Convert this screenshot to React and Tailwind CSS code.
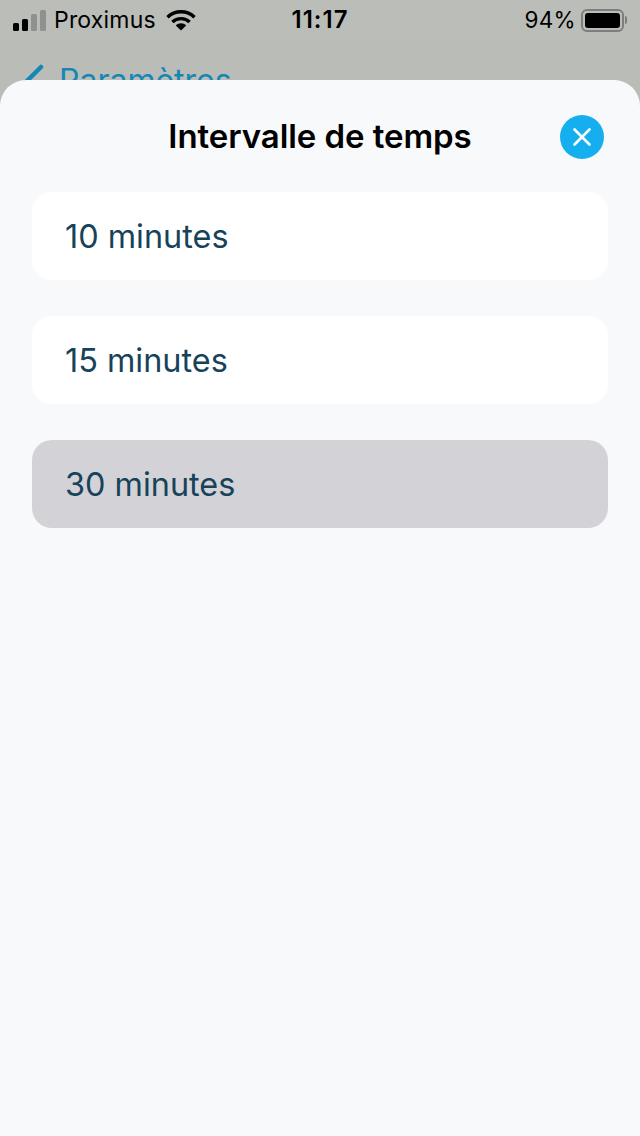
import React from 'react';

const options = ['10 minutes', '15 minutes', '30 minutes'];
const selected = '30 minutes';

function StatusBar() {
  return (
    <div className="flex h-10 items-center justify-between px-[13px] text-black">
      <div className="flex w-[240px] items-center">
        <div className="flex items-end gap-[3px]">
          <span className="h-[8px] w-[6px] rounded-[1.5px] bg-black" />
          <span className="h-[12px] w-[6px] rounded-[1.5px] bg-black" />
          <span className="h-[17px] w-[6px] rounded-[1.5px] bg-[#8f918f]" />
          <span className="h-[21px] w-[6px] rounded-[1.5px] bg-[#8f918f]" />
        </div>
        <span className="ml-[8px] text-[23px] leading-none tracking-[0.2px]">Proximus</span>
        <svg className="ml-[10px]" width="30" height="22" viewBox="0 0 30 22" fill="none">
          <path d="M1.5 8.2C8.8 1 21.2 1 28.5 8.2" stroke="#000" strokeWidth="3.4" />
          <path d="M6.4 13C10.9 8.5 19.1 8.5 23.6 13" stroke="#000" strokeWidth="3.4" />
          <path d="M15 21.5L9.8 16.5C12.4 13.6 17.6 13.6 20.2 16.5Z" fill="#000" />
        </svg>
      </div>
      <span className="text-[24px] leading-none font-semibold tracking-[1px]">11:17</span>
      <div className="flex w-[240px] items-center justify-end">
        <span className="text-[22.5px] leading-none tracking-[0.3px]">94%</span>
        <div className="ml-[5px] flex items-center">
          <div className="flex h-[23px] w-[43px] items-center rounded-[6px] border-2 border-[#7d7f7d] p-[2px]">
            <div className="h-full w-full rounded-[3px] bg-black" />
          </div>
          <div className="ml-[1px] h-[8px] w-[2px] rounded-r-sm bg-[#7d7f7d]" />
        </div>
      </div>
    </div>
  );
}

function CloseButton() {
  return (
    <button className="flex h-[44px] w-[44px] items-center justify-center rounded-full bg-[#15aeee]">
      <svg width="20" height="20" viewBox="0 0 20 20" fill="none">
        <path d="M2.5 2.5L17.5 17.5M17.5 2.5L2.5 17.5" stroke="#fff" strokeWidth="2.6" strokeLinecap="round" />
      </svg>
    </button>
  );
}

export default function App() {
  return (
    <div className="relative h-[1136px] w-[640px] overflow-hidden bg-gradient-to-b from-[#bbbdb9] to-[#adafab] font-['Inter',sans-serif]">
      <StatusBar />
      <div className="mt-[24px] flex items-center pl-[22px]">
        <svg width="22" height="34" viewBox="0 0 22 34" fill="none">
          <path d="M19 3L4 18L19 33" stroke="#1488b4" strokeWidth="4.5" strokeLinecap="round" />
        </svg>
        <span className="ml-[15px] text-[32px] leading-none text-[#1488b4]">Paramètres</span>
      </div>

      <div className="absolute inset-x-0 bottom-0 top-[80px] rounded-t-[26px] bg-[#f8f9fb] px-8">
        <div className="relative flex h-[114px] items-center justify-center pb-[2px]">
          <h1 className="text-[33px] leading-none font-semibold tracking-[-0.07px] text-black">Intervalle de temps</h1>
          <div className="absolute right-[4px] top-[35px]">
            <CloseButton />
          </div>
        </div>
        <div className="-mt-[2px] flex flex-col gap-9">
          {options.map((option) => (
            <div
              key={option}
              className={`flex h-[88px] items-center rounded-[20px] px-[33px] pt-[2px] text-[32.4px] text-[#17435a] ${
                option === selected ? 'bg-[#d3d2d7]' : 'bg-white'
              }`}
            >
              {option}
            </div>
          ))}
        </div>
      </div>
    </div>
  );
}
